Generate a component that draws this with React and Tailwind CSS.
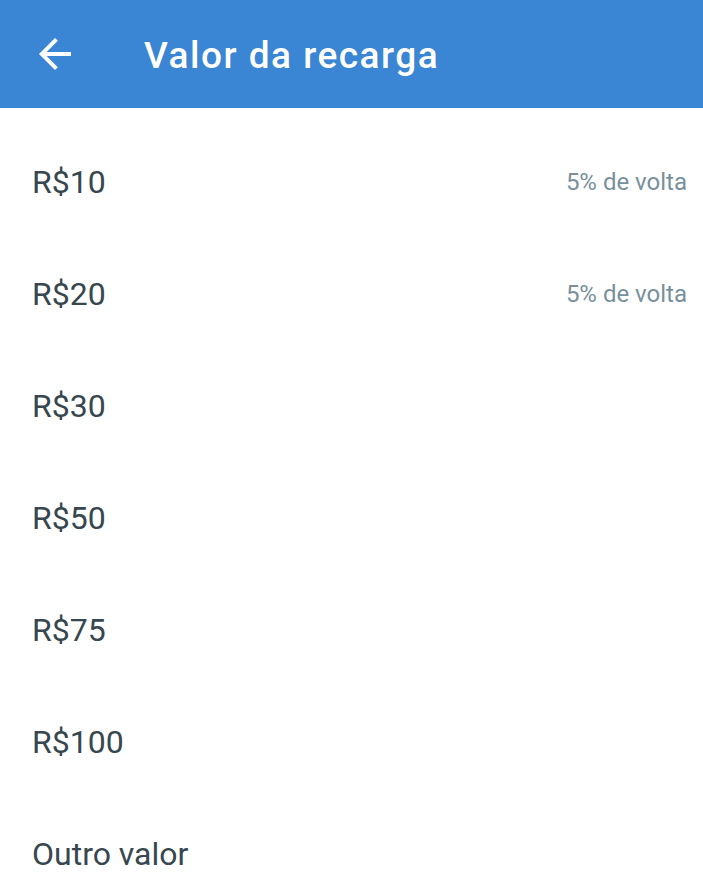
import React from 'react';

const amounts = [
  { label: 'R$10', bonus: '5% de volta' },
  { label: 'R$20', bonus: '5% de volta' },
  { label: 'R$30' },
  { label: 'R$50' },
  { label: 'R$75' },
  { label: 'R$100' },
  { label: 'Outro valor' },
];

const App = () => {
  return (
    <div className="min-h-screen w-full bg-white" style={{ fontFamily: 'Roboto, "Noto Sans", sans-serif' }}>
      {/* Top bar */}
      <header className="h-[108px] w-full bg-[#3a86d4] flex items-center">
        <button className="ml-[31px] h-12 w-12 flex items-center justify-center text-white">
          <svg viewBox="0 0 24 24" width="48" height="48" fill="currentColor">
            <path d="M20 11H7.83l5.59-5.59L12 4l-8 8 8 8 1.41-1.41L7.83 13H20v-2z" />
          </svg>
        </button>
        <h1 className="ml-[65px] text-white text-[37px] font-medium leading-none tracking-[1.5px] mt-[2px]">Valor da recarga</h1>
      </header>

      {/* Amount list */}
      <ul className="pt-[18px]">
        {amounts.map((item) => (
          <li key={item.label} className="h-[112px] flex items-center justify-between pl-[32px] pr-[16px]">
            <span className="text-[32px] text-[#37474f]">{item.label}</span>
            {item.bonus && <span className="text-[24px] text-[#78909c]">{item.bonus}</span>}
          </li>
        ))}
      </ul>
    </div>
  );
};

export default App;
